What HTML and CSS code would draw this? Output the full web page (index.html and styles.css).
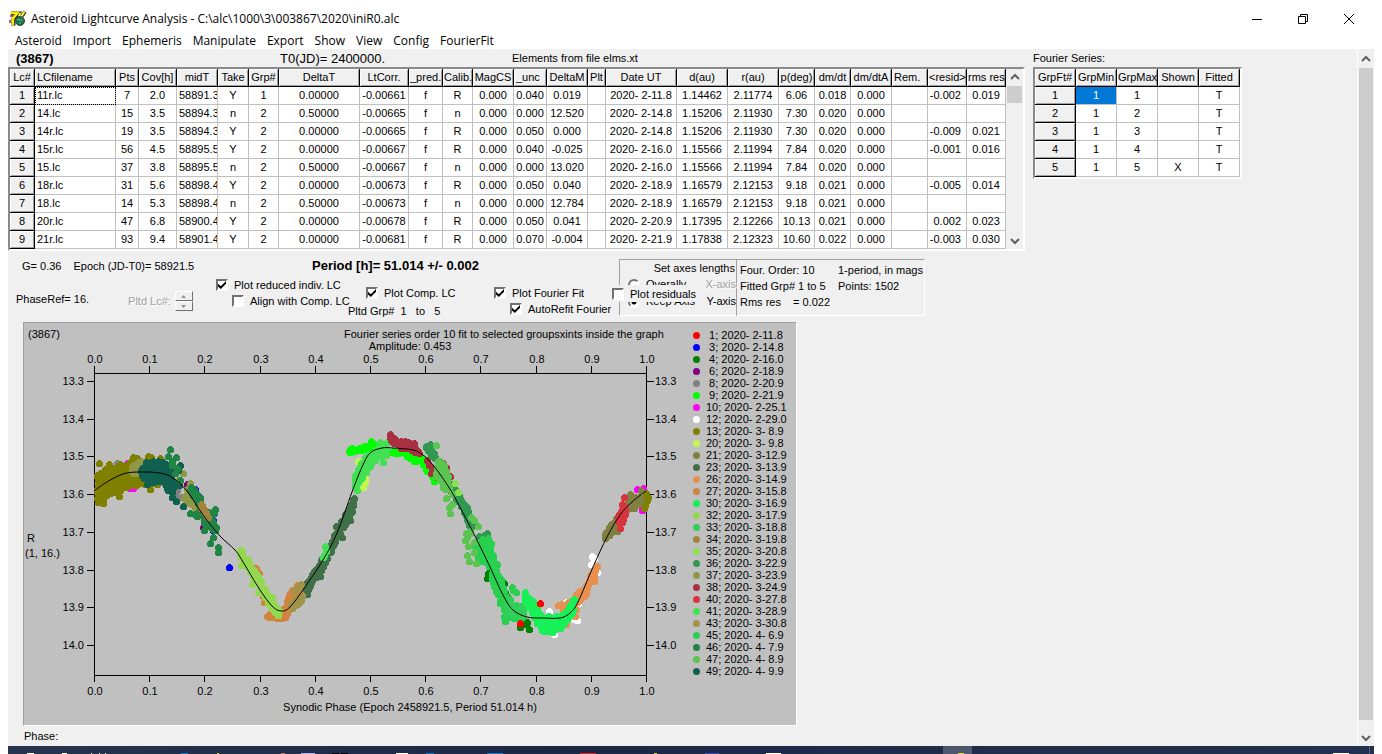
FILE: index.html
```html
<!DOCTYPE html>
<html lang="en">
<head>
<meta charset="utf-8">
<title>Asteroid Lightcurve Analysis</title>
<link rel="stylesheet" href="styles.css">
</head>
<body>
<header class="titlebar">
  <svg class="app-icon" viewBox="0 0 18 18" width="18" height="18" aria-hidden="true">
    <path d="M2 3.500h7L4.500 9v6.500" fill="none" stroke="#222" stroke-width="4"/>
    <path d="M1.500 3h7L4 8.500V15" fill="none" stroke="#f4f000" stroke-width="2.500"/>
    <path d="M1 6h3M1 10v3" stroke="#c02020" stroke-width="1.500" fill="none"/>
    <path d="M10 7L11.500 3M12.500 7L16 1.500" stroke="#333" stroke-width="3.500"/>
    <path d="M10 7L11 3M12 7L15.500 1.500" stroke="#ffff30" stroke-width="2"/>
    <circle cx="11" cy="11" r="4.500" fill="#187838" stroke="#404048"/>
    <path d="M8 10l2-1 1 2M12 9l1 2M10 13h2" stroke="#50c0d0" stroke-width="1" fill="none"/>
  </svg>
  <h1 class="title">Asteroid Lightcurve Analysis - C:\alc\1000\3\003867\2020\iniR0.alc</h1>
  <div class="window-buttons">
    <button aria-label="Minimize"><svg width="12" height="12" viewBox="0 0 12 12"><path d="M1 6.5h10"/></svg></button>
    <button aria-label="Restore"><svg width="12" height="12" viewBox="0 0 12 12"><path d="M1.5 3.5h7v7h-7zM3.5 3.5v-2h7v7h-2"/></svg></button>
    <button aria-label="Close"><svg width="12" height="12" viewBox="0 0 12 12"><path d="M1 1l10 10M11 1L1 11"/></svg></button>
  </div>
</header>
<nav class="menu">
  <button>Asteroid</button><button>Import</button><button>Ephemeris</button><button>Manipulate</button><button>Export</button><button>Show</button><button>View</button><button>Config</button><button>FourierFit</button>
</nav>

<div class="workspace">
  <main class="pane">
    <div class="tables">
      <section class="lightcurves">
        <div class="caption-row">
          <strong class="object">(3867)</strong>
          <span class="epoch-zero">T0(JD)= 2400000.</span>
          <span class="elements">Elements from file elms.xt</span>
        </div>
        <div class="sunken">
          <table class="grid" id="lc-grid">
            <colgroup></colgroup><thead></thead><tbody></tbody>
          </table>
          <div class="scroll" aria-hidden="true">
            <svg width="17" height="17" viewBox="0 0 17 17"><path d="M5 10l4-4 4 4"/></svg>
            <div class="thumb short"></div>
            <svg class="down" width="17" height="17" viewBox="0 0 17 17"><path d="M5 7l4 4 4-4"/></svg>
          </div>
        </div>
      </section>
      <section class="series">
        <div class="caption-row">Fourier Series:</div>
        <div class="sunken">
          <table class="grid" id="fit-grid">
            <colgroup></colgroup><thead></thead><tbody></tbody>
          </table>
        </div>
      </section>
    </div>

    <form class="controls">
      <div class="epoch-block">
        <p class="epoch-line"><span>G= 0.36</span><span>Epoch (JD-T0)= 58921.5</span></p>
        <div class="phase-line">
          <span class="phase-ref">PhaseRef= 16.</span>
          <span class="spin-label">Pltd Lc#:</span>
          <span class="spinner">
            <button type="button" aria-label="Next light curve" disabled><svg width="5" height="3" viewBox="0 0 5 3"><path d="M0 3l2.500-3L5 3z"/></svg></button>
            <button type="button" aria-label="Previous light curve" disabled><svg width="5" height="3" viewBox="0 0 5 3"><path d="M0 0l2.500 3L5 0z"/></svg></button>
          </span>
        </div>
      </div>
      <div class="plot-block">
        <p class="period">Period [h]= 51.014 +/- 0.002</p>
        <div class="options">
          <div class="stack">
            <label class="tick"><input type="checkbox" checked>Plot reduced indiv. LC</label>
            <label class="tick indent"><input type="checkbox">Align with Comp. LC</label>
          </div>
          <div class="stack lower comp">
            <label class="tick"><input type="checkbox" checked>Plot Comp. LC</label>
            <p class="group-range">Pltd Grp#&nbsp; 1&nbsp;&nbsp; to&nbsp;&nbsp; 5</p>
          </div>
          <div class="stack lower">
            <label class="tick"><input type="checkbox" checked>Plot Fourier Fit</label>
            <label class="tick indent"><input type="checkbox" checked>AutoRefit Fourier</label>
          </div>
        </div>
      </div>
      <div class="axes-box">
        <p class="axes-title">Set axes lengths</p>
        <div class="axes-row"><label><input type="radio" name="axes" disabled>Overally</label><span class="muted">X-axis</span></div>
        <div class="axes-row"><label><input type="radio" name="axes" checked>Keep Axis</label><span>Y-axis</span></div>
        <label class="tick residuals"><input type="checkbox">Plot residuals</label>
      </div>
      <div class="fit-box">
        <span>Four. Order: 10</span><span>1-period, in mags</span>
        <span>Fitted Grp# 1 to 5</span><span>Points: 1502</span>
        <span class="rms"><span>Rms res</span><span>= 0.022</span></span>
      </div>
    </form>

    <section class="chart">
      <svg id="plot" class="plot" viewBox="24 323 669 402" width="669" height="402" role="img" aria-label="Light curve of (3867)"></svg>
      <ul class="legend" id="legend"></ul>
    </section>
    <p class="status">Phase:</p>
  </main>
  <div class="scroll page-scroll" aria-hidden="true">
    <svg width="17" height="17" viewBox="0 0 17 17"><path d="M4 10l4-4 4 4"/></svg>
    <div class="thumb"></div>
    <svg class="down" width="17" height="26" viewBox="0 0 17 26"><path d="M4 16l4 4 4-4"/></svg>
  </div>
</div>
<footer class="taskbar" aria-hidden="true">
  <svg width="1366" height="8" viewBox="8 0 1366 8">
    <path fill="#4d586f" d="M943 0h29v8h-29z"/>
    <path fill="#fff" d="M27 7h7v1h-7zM62 7h5v1h-5zM91 7h1v1h-1zM99 7h1v1h-1zM105 7h1v1h-1zM396 7h12v1h-12zM766 7h15v1h-15zM1333 7h16v1h-16z"/>
    <path fill="#1878c8" d="M181 7h7v1h-7zM426 7h8v1h-8zM487 7h16v1h-16z"/>
    <path fill="#b0b0f0" d="M301 7h14v1h-14z"/>
    <path fill="#000" d="M332 7h7v1h-7zM341 7h7v1h-7z"/>
    <path fill="#e02020" d="M580 7h16v1h-16z"/>
    <path fill="#e8e040" d="M217 7h2v1h-2zM654 7h3v1h-3zM958 7h6v1h-6z"/>
    <path fill="#c08060" d="M281 7h4v1h-4z"/>
    <path fill="#4050b8" d="M705 7h14v1h-14z"/>
    <path fill="#56617a" d="M1369 0h1v8h-1z"/>
  </svg>
</footer>
<script src="app.js"></script>
</body>
</html>
```
FILE: styles.css
```css
* { box-sizing: border-box; }
body {
  margin: 0;
  height: 100vh;
  display: flex;
  flex-direction: column;
  overflow: hidden;
  background: #fff;
  color: #000;
  font: 11px/16px "Liberation Sans", Arial, sans-serif;
}
p, h1, ul { margin: 0; padding: 0; }
button, input { font: inherit; color: inherit; margin: 0; }

.titlebar {
  display: flex;
  align-items: center;
  gap: 4px;
  flex: none;
  height: 33px;
  padding: 4px 10px 0 9px;
  font: 12px/20px "Open Sans", sans-serif;
}
.title { font: inherit; }
.window-buttons { display: flex; margin-left: auto; }
.window-buttons button { width: 46px; height: 28px; padding: 0; border: 0; background: none; }
.window-buttons svg { display: block; margin: auto; fill: none; stroke: #000; }

.menu { display: flex; flex: none; gap: 11px; height: 16px; padding-left: 15px; }
.menu button { padding: 0; border: 0; background: none; font: 12px/16px "Open Sans", sans-serif; }

.workspace { display: flex; flex: 1; min-height: 0; margin: 0 8px; background: #f0f0f0; }
.pane { flex: 1; min-width: 0; overflow: hidden; }

.tables { display: flex; align-items: flex-start; gap: 8px; }
.caption-row { display: flex; height: 18px; line-height: 18px; white-space: nowrap; }
.object { width: 272px; padding-left: 8px; font-size: 13px; line-height: 20px; }
.epoch-zero { width: 232px; font-size: 13px; line-height: 20px; }
.sunken {
  display: flex;
  width: max-content;
  border: 2px solid;
  border-color: #8a8a8a #fff #fff #8a8a8a;
}

.grid { border-collapse: separate; border-spacing: 0; table-layout: fixed; width: min-content; background: #fff; }
.grid th, .grid td {
  height: 18px;
  padding: 0 1px;
  overflow: hidden;
  white-space: nowrap;
  font-weight: 400;
  line-height: 17px;
  text-align: center;
  border: solid #c0c0c0;
  border-width: 0 1px 1px 0;
}
.grid th { background: #f0f0f0; border-color: #000; box-shadow: inset 1px 1px #fff, inset -1px -1px #a0a0a0; }
.grid .left { text-align: left; padding-left: 2px; }
.grid .right { text-align: right; padding-right: 5px; }
.grid .focus { outline: 1px dotted #000; outline-offset: -1px; }
.grid .selected { background: #0078d7; color: #fff; }

.scroll { display: flex; flex-direction: column; width: 17px; background: #f0f0f0; }
.scroll svg { flex: none; fill: none; stroke: #606060; stroke-width: 2; }
.scroll .down { margin-top: auto; }
.thumb { flex: 1; margin: 0 1px; background: #cdcdcd; }
.thumb.short { flex: none; height: 17px; }
.page-scroll { border-left: 1px solid #fff; padding-top: 2px; }

.controls { display: flex; height: 71px; padding-top: 8px; }
.epoch-block { flex: none; width: 208px; padding-left: 8px; }
.epoch-line { display: flex; gap: 12px; padding-left: 6px; line-height: 14px; }
.phase-line { display: flex; align-items: center; padding-top: 18px; }
.phase-ref { align-self: flex-start; }
.spin-label { margin-left: 39px; color: #a0a0a0; text-shadow: 1px 1px #fff; }
.spinner { display: flex; flex-direction: column; margin-left: 4px; }
.spinner button {
  display: grid;
  place-items: center;
  width: 18px;
  height: 10px;
  padding: 0;
  background: #f0f0f0;
  border: 1px solid;
  border-color: #fff #707070 #707070 #fff;
}
.spinner path { fill: #909090; }
.plot-block { flex: none; width: 403px; }
.period { padding-left: 96px; font-size: 13px; line-height: 14px; font-weight: 700; }
.options { display: flex; padding-top: 4px; }
.stack { flex: none; width: 150px; }
.lower { padding-top: 8px; }
.comp { width: 128px; }
.tick { display: flex; align-items: center; gap: 6px; height: 16px; white-space: nowrap; }
.indent { margin-left: 16px; }
.group-range { margin-left: -18px; line-height: 20px; }
.tick input, .axes-row input { appearance: none; flex: none; width: 12px; height: 12px; background: #fff; }
.tick input {
  display: grid;
  place-items: center;
  border: 2px solid;
  border-color: #707070 #fff #fff #707070;
}
.tick input:checked::after {
  content: "";
  width: 8px;
  height: 8px;
  background: #000;
  clip-path: polygon(0 35%, 35% 65%, 100% 0, 100% 35%, 35% 100%, 0 70%);
}
.axes-box, .fit-box {
  flex: none;
  height: 57px;
  border: 1px solid;
  border-color: #a0a0a0 #fff #fff #a0a0a0;
}
.axes-box { position: relative; width: 117px; border-right: 0; }
.axes-title { padding-right: 1px; text-align: right; white-space: nowrap; }
.axes-row { display: flex; justify-content: space-between; height: 17px; line-height: 17px; }
.axes-row label { display: flex; align-items: center; gap: 6px; padding-left: 8px; }
.axes-row input { border: 2px solid; border-color: #707070 #fff #fff #707070; border-radius: 50%; }
.axes-row input:checked { background: radial-gradient(#000 2px, #fff 3px); }
.muted { color: #a0a0a0; text-shadow: 1px 1px #fff; }
.residuals { position: absolute; left: -8px; top: 25px; width: 94px; height: 17px; background: #f0f0f0; }
.fit-box {
  display: grid;
  grid-template-columns: 98px auto;
  align-content: start;
  width: 189px;
  padding: 2px 0 0 3px;
  white-space: nowrap;
}
.rms { display: flex; }
.rms span:first-child { width: 53px; }

.chart {
  display: flex;
  width: max-content;
  margin-left: 15px;
  padding-right: 9px;
  background: #c0c0c0;
  border: 1px solid;
  border-color: #a0a0a0 #fff #fff #a0a0a0;
}
.plot { display: block; font-size: 11px; }
.axis { fill: none; stroke: #000; shape-rendering: crispEdges; }
.fit { fill: none; stroke: #000; }
.dots { shape-rendering: crispEdges; fill: none; stroke-width: 7; stroke-linecap: round; }
.mid { text-anchor: middle; }
.end { text-anchor: end; }
.legend { list-style: none; padding-top: 6px; }
.legend li { display: flex; align-items: center; gap: 6px; height: 12px; line-height: 12px; white-space: pre; }
.legend i { width: 7px; height: 7px; border-radius: 50%; }
.status { padding: 2px 0 0 16px; }

.taskbar { flex: none; height: 8px; margin: 0 8px; overflow: hidden; background: linear-gradient(90deg, #26344e, #1c2746 40%, #22314f); }
.taskbar svg { display: block; }
```
FILE: app.js
```js
function fillGrid(id, columns, rows, decorate) {
  const table = document.getElementById(id);
  const make = (tag, parent, text) => {
    const el = document.createElement(tag);
    if (text !== undefined) el.textContent = text;
    return parent.appendChild(el);
  };
  columns.forEach(([, width]) => { make('col', table.querySelector('colgroup')).style.width = width + 'px'; });
  const head = make('tr', table.tHead);
  columns.forEach(([name, , headClass]) => { make('th', head, name).className = headClass || ''; });
  rows.forEach((row, r) => {
    const tr = make('tr', table.tBodies[0]);
    row.forEach((value, c) => {
      const cell = make(c ? 'td' : 'th', tr, value);
      cell.className = (c && columns[c][3]) || '';
      decorate(cell, r, c);
    });
  });
}

const lcColumns = [
  ['Lc#', 25], ['LCfilename', 81, 'left', 'left'], ['Pts', 23], ['Cov[h]', 38], ['midT', 41, '', 'left'],
  ['Take', 31], ['Grp#', 30], ['DeltaT', 81], ['LtCorr.', 49], ['_pred.', 34], ['Calib.', 30], ['MagCS', 41],
  ['_unc', 33, 'left'], ['DeltaM', 41], ['Plt', 18], ['Date UT', 71], ['d(au)', 51], ['r(au)', 51],
  ['p(deg)', 36], ['dm/dt', 36], ['dm/dtA', 41], ['Rem.', 36, 'left'], ['<resid>', 39, '', 'right'], ['rms res', 39]
];
const lcRows = `1|11r.lc|7|2.0|58891.3|Y|1|0.00000|-0.00661|f|R|0.000|0.040|0.019||2020- 2-11.8|1.14462|2.11774|6.06|0.018|0.000||-0.002|0.019
2|14.lc|15|3.5|58894.3|n|2|0.50000|-0.00665|f|n|0.000|0.000|12.520||2020- 2-14.8|1.15206|2.11930|7.30|0.020|0.000|||
3|14r.lc|19|3.5|58894.3|Y|2|0.00000|-0.00665|f|R|0.000|0.050|0.000||2020- 2-14.8|1.15206|2.11930|7.30|0.020|0.000||-0.009|0.021
4|15r.lc|56|4.5|58895.5|Y|2|0.00000|-0.00667|f|R|0.000|0.040|-0.025||2020- 2-16.0|1.15566|2.11994|7.84|0.020|0.000||-0.001|0.016
5|15.lc|37|3.8|58895.5|n|2|0.50000|-0.00667|f|n|0.000|0.000|13.020||2020- 2-16.0|1.15566|2.11994|7.84|0.020|0.000|||
6|18r.lc|31|5.6|58898.4|Y|2|0.00000|-0.00673|f|R|0.000|0.050|0.040||2020- 2-18.9|1.16579|2.12153|9.18|0.021|0.000||-0.005|0.014
7|18.lc|14|5.3|58898.4|n|2|0.50000|-0.00673|f|n|0.000|0.000|12.784||2020- 2-18.9|1.16579|2.12153|9.18|0.021|0.000|||
8|20r.lc|47|6.8|58900.4|Y|2|0.00000|-0.00678|f|R|0.000|0.050|0.041||2020- 2-20.9|1.17395|2.12266|10.13|0.021|0.000||0.002|0.023
9|21r.lc|93|9.4|58901.4|Y|2|0.00000|-0.00681|f|R|0.000|0.070|-0.004||2020- 2-21.9|1.17838|2.12323|10.60|0.022|0.000||-0.003|0.030`
  .split('\n').map(line => line.split('|'));
fillGrid('lc-grid', lcColumns, lcRows, (cell, r, c) => { if (r === 0 && c === 1) cell.classList.add('focus'); });

const fitColumns = ['GrpFt#', 'GrpMin', 'GrpMax', 'Shown', 'Fitted'].map(name => [name, 41]);
const fitRows = [1, 2, 3, 4, 5].map(n => [n, 1, n, n === 5 ? 'X' : '', 'T']);
fillGrid('fit-grid', fitColumns, fitRows, (cell, r, c) => { if (r === 0 && c === 1) cell.classList.add('selected'); });

/* Observing sessions: legend label and colour */
const sessions = [
  [1, ' 2-11.8', '#ff0000'], [3, ' 2-14.8', '#0000ff'], [4, ' 2-16.0', '#008000'], [6, ' 2-18.9', '#800080'],
  [8, ' 2-20.9', '#808080'], [9, ' 2-21.9', '#00ff00'], [10, ' 2-25.1', '#ff00ff'], [12, ' 2-29.0', '#ffffff'],
  [13, ' 3- 8.9', '#808000'], [20, ' 3- 9.8', '#c0f850'], [21, ' 3-12.9', '#808040'], [23, ' 3-13.9', '#407048'],
  [26, ' 3-14.9', '#e89050'], [27, ' 3-15.8', '#d08440'], [30, ' 3-16.9', '#18f058'], [32, ' 3-17.9', '#94d850'],
  [33, ' 3-18.8', '#30d058'], [34, ' 3-19.8', '#a08440'], [35, ' 3-20.8', '#8ce050'], [36, ' 3-22.9', '#309850'],
  [37, ' 3-23.9', '#909848'], [38, ' 3-24.9', '#a83040'], [40, ' 3-27.8', '#d83440'], [41, ' 3-28.9', '#44e054'],
  [43, ' 3-30.8', '#a09448'], [45, ' 4- 6.9', '#28d050'], [46, ' 4- 7.9', '#208444'], [47, ' 4- 8.9', '#5cc450'],
  [49, ' 4- 9.9', '#106050']
];
const colour = {};
const legend = document.getElementById('legend');
sessions.forEach(([n, date, c]) => {
  colour[n] = c;
  const li = document.createElement('li');
  const dot = document.createElement('i');
  dot.style.background = c;
  li.append(dot, (n < 10 ? ' ' : '') + n + '; 2020-' + date);
  legend.append(li);
});

/* Each cloud: session, number of scattered points, [x, top, bottom] envelope, single points */
const clouds = [
  [8, 0, [], [[117,463],[118,467]]],
  [10, 0, [], [[127,463],[133,488],[130,488]]],
  [13, 320, [[97,470,502],[103,466,500],[112,468,492],[118,466,492],[130,462,485],[148,462,486],[158,464,486]], [[99,463],[109,464],[120,464],[133,457],[137,458],[148,456],[151,457],[160,458],[103,503],[98,502],[119,496],[150,489]]],
  [37, 60, [[132,465,473],[142,460,474]], [[183,473],[178,480]]],
  [8, 0, [], [[177,490],[181,497],[176,496]]],
  [49, 170, [[141,469,473],[145,462,480],[152,460,482],[162,461,481],[166,462,492],[174,466,492]], [[180,465],[176,501],[183,506],[172,497],[178,470],[147,484],[179,485]]],
  [46, 0, [], [[170,449],[168,456],[176,457],[172,461],[172,465],[177,468],[175,473],[180,480]]],
  [6, 0, [], [[187,484],[203,527]]],
  [3, 0, [], [[195,489],[197,495],[213,520],[213,530],[229,567]]],
  [37, 40, [[184,486,498],[192,496,506],[199,510,515]], [[190,483]]],
  [46, 55, [[190,486,492],[196,490,503],[201,498,503],[203,512,522],[210,518,528],[216,524,532]], [[190,513],[195,514],[199,511],[197,516],[204,530],[215,509],[209,512],[214,513],[210,543],[218,547],[218,552],[213,537],[200,497]]],
  [34, 14, [[201,503,508],[208,514,520]], [[205,513]]],
  [27, 70, [[267,612,617],[276,614,618],[283,610,620],[288,596,614],[294,586,605],[301,583,592]], [[256,568],[259,573],[258,579],[263,596],[264,602]]],
  [32, 90, [[239,546,553],[243,550,562],[250,562,573],[256,572,582],[262,582,592],[270,598,607],[276,605,614],[280,612,619]], [[252,584],[258,592],[272,597],[241,565]]],
  [23, 130, [[306,584,593],[312,574,582],[320,562,572],[325,551,563],[332,540,550],[337,528,538],[345,513,525],[350,506,516],[354,495,507]], [[350,520],[307,594],[336,526],[320,576],[342,537]]],
  [43, 60, [[291,604,608],[296,598,606],[302,595,600]], [[297,588],[301,584],[299,586],[295,590]]],
  [41, 0, [], [[325,546],[326,551],[324,555],[323,557]]],
  [20, 0, [], [[358,461],[361,462],[363,487],[365,478],[365,482],[360,487]]],
  [9, 100, [[349,449,452],[354,446,451],[361,446,450],[371,443,447],[380,446,450],[396,451,454],[404,450,455],[414,458,461],[422,456,462],[428,468,474]], [[371,441],[434,481],[432,476]]],
  [41, 160, [[354,476,488],[359,466,481],[365,456,474],[372,452,463],[379,446,456],[386,444,455]], [[380,442],[387,442],[383,462],[357,490]]],
  [38, 110, [[389,433,436],[393,437,442],[398,442,447],[406,440,449],[414,446,452],[419,452,453]], [[414,443],[427,460],[429,465],[432,468],[431,473],[434,472],[437,477],[443,463],[446,467],[447,474],[450,476],[450,490]]],
  [36, 60, [[426,445,446],[430,448,453],[435,454,459]], [[430,444]]],
  [36, 100, [[450,480,487],[457,492,500],[464,503,512],[468,508,525],[473,520,530]], [[479,536],[484,535],[487,537],[487,533]]],
  [35, 0, [], [[455,483],[458,492]]],
  [47, 90, [[436,473,476],[439,456,478],[443,464,488],[449,477,494]], [[436,445],[452,504],[446,498],[449,507],[450,513],[452,494],[471,517],[474,520],[478,526]]],
  [4, 0, [], [[484,553],[488,573],[487,578],[504,583],[505,592],[507,597],[522,606],[520,627],[525,624],[529,629],[527,622]]],
  [45, 230, [[477,550,560],[482,538,562],[488,538,562],[493,556,582],[499,572,602],[504,588,616],[510,604,618],[522,610,620]], [[512,587],[516,592],[513,590],[505,621],[507,615],[497,564],[474,545],[491,543],[490,549]]],
  [47, 0, [], [[466,533],[465,540],[470,531],[468,546],[474,542],[467,555],[469,561],[474,552],[476,563],[467,537],[470,533]]],
  [33, 50, [[505,598,612],[512,602,614],[524,606,618]], [[510,599]]],
  [12, 0, [], [[592,556],[594,558],[591,564],[549,611],[554,634],[574,619],[577,620],[566,602],[578,603],[597,572]]],
  [26, 90, [[563,607,609],[572,598,606],[579,590,600],[585,587,595],[590,574,582],[595,568,582]], [[558,605],[561,604],[566,624],[575,616],[576,609],[597,566]]],
  [30, 210, [[525,594,601],[531,600,610],[537,604,622],[543,616,632],[552,616,632],[562,614,626],[570,605,616],[574,597,608]], [[525,592],[533,601],[560,628]]],
  [1, 0, [], [[540,603],[520,623]]],
  [10, 0, [], [[637,489],[643,488],[641,500],[642,510],[647,499]]],
  [21, 110, [[605,534,537],[612,522,533],[618,515,532],[623,508,516],[628,500,508],[634,497,508],[642,494,502]], [[630,494],[641,490],[605,538]]],
  [40, 45, [[618,516,523],[621,509,525],[625,505,514]], [[624,497],[620,528],[622,504]]],
  [13, 0, [], [[646,493],[648,497],[647,500],[645,505],[644,508]]]
];

/* Points that the fitted Fourier curve passes through */
const curve = [[94,491],[107,482],[123,474],[138,472],[160,473],[173,478],[187,491],[203,515],[220,536],[235,550],[243,562],[260,590],[272,606],[281,611],[290,607],[305,587],[323,560],[337,533],[352,492],[362,467],[370,453],[382,448],[393,448],[413,450],[423,455],[433,465],[450,489],[463,513],[477,540],[490,567],[503,595],[513,610],[527,617],[543,618],[560,618],[570,613],[578,602],[593,567],[607,537],[620,515],[632,502],[646,491]];

let seed = 3867;
const random = () => (seed = (seed * 16807) % 2147483647) / 2147483647;

function scatter(count, envelope) {
  const points = [];
  const first = envelope[0], last = envelope[envelope.length - 1];
  for (let i = 0; i < count; i++) {
    const x = first[0] + random() * (last[0] - first[0]);
    let k = 1;
    while (envelope[k][0] < x) k++;
    const a = envelope[k - 1], b = envelope[k], t = (x - a[0]) / (b[0] - a[0]);
    const top = a[1] + t * (b[1] - a[1]), bottom = a[2] + t * (b[2] - a[2]);
    points.push([Math.round(x), Math.round(top + random() * (bottom - top))]);
  }
  return points;
}

function smooth(p) {
  let d = `M${p[0]}`;
  for (let i = 0; i < p.length - 1; i++) {
    const a = p[i - 1] || p[i], b = p[i], c = p[i + 1], e = p[i + 2] || c;
    d += `C${b[0] + (c[0] - a[0]) / 6} ${b[1] + (c[1] - a[1]) / 6} ${c[0] - (e[0] - b[0]) / 6} ${c[1] - (e[1] - b[1]) / 6} ${c[0]} ${c[1]}`;
  }
  return d;
}

const plot = document.getElementById('plot');
const text = (x, y, value, cls) => `<text x="${x}" y="${y}" class="${cls || ''}">${value}</text>`;
let axis = 'M94.500 366V682M646.500 366V682M94 373.500H647M94 675.500H647';
let out = text(28, 338, '(3867)') + text(344, 338, 'Fourier series order 10 fit to selected groupsxints inside the graph')
  + text(410, 350, 'Amplitude: 0.453', 'mid') + text(410, 711, 'Synodic Phase (Epoch 2458921.5, Period 51.014 h)', 'mid')
  + text(27, 542, 'R') + text(25, 557, '(1, 16.)');
for (let i = 0; i <= 10; i++) {
  const x = Math.round(94 + i * 55.2);
  axis += `M${x + 0.5} 366v7M${x + 0.5} 676v6`;
  out += text(x + 1, 363, (i / 10).toFixed(1), 'mid') + text(x + 1, 695, (i / 10).toFixed(1), 'mid');
}
for (let i = 0; i <= 7; i++) {
  const y = Math.round(381 + i * 37.7);
  axis += `M87 ${y + 0.5}h7M647 ${y + 0.5}h7`;
  const label = (13.3 + i / 10).toFixed(1);
  out += text(84, y + 4, label, 'end') + text(655, y + 4, label);
}
out += `<path class="axis" d="${axis}"/>`;
clouds.forEach(([n, count, envelope, singles]) => {
  const points = (count ? scatter(count, envelope) : []).concat(singles);
  out += `<path class="dots" stroke="${colour[n]}" d="${points.map(([x, y]) => `M${x + 0.5} ${y + 0.5}h.01`).join('')}"/>`;
});
out += `<path class="fit" d="${smooth(curve)}"/>`;
plot.innerHTML = out;
```
